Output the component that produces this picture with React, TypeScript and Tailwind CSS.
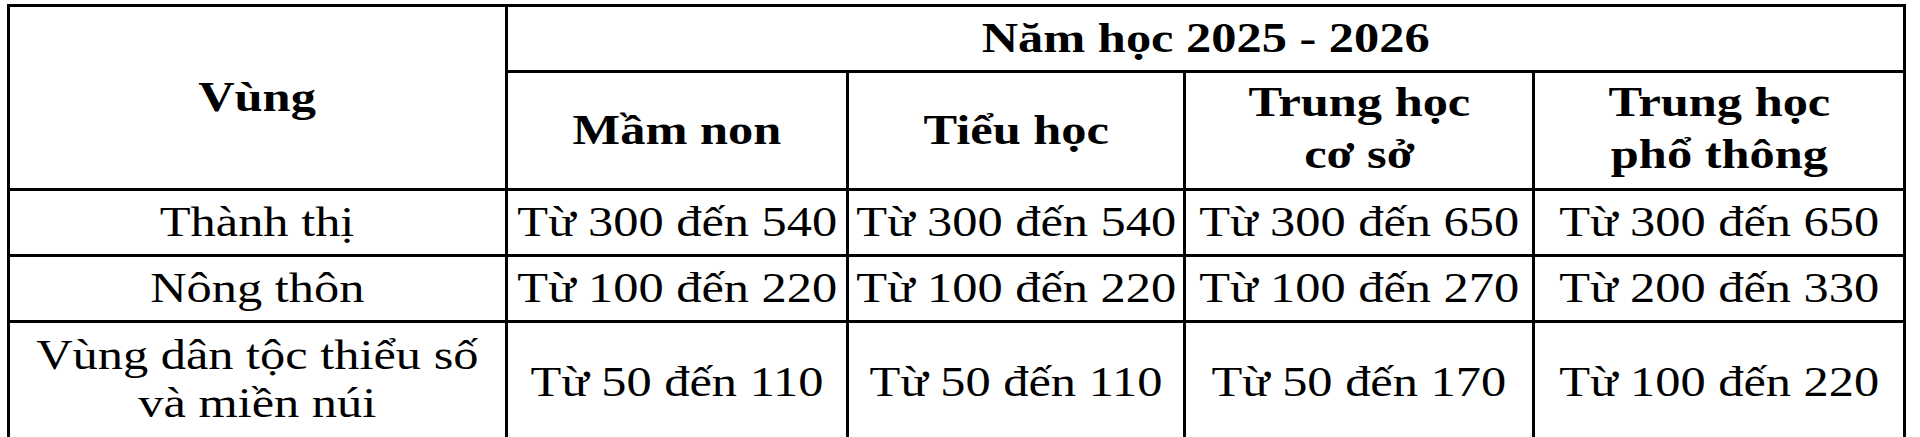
// the source table is stretched sideways, so every label gets a horizontal scale
const boldLabel =
  "inline-block scale-x-120 whitespace-nowrap font-['Liberation_Serif'] font-bold leading-[52px]";
const plainLabel =
  "inline-block scale-x-120 whitespace-nowrap font-['Liberation_Serif'] font-normal leading-[48px]";
const cell =
  "border-[3px] border-black p-0 text-center align-middle font-['Liberation_Serif'] text-[42px] text-black";
const page =
  "h-[437px] w-[1920px] overflow-hidden bg-white pl-[7px] pt-[4px] font-['Liberation_Serif'] text-[42px] text-black";

const Label = ({ lines, bold = false }: { lines: string[]; bold?: boolean }) => (
  <span className={bold ? boldLabel : plainLabel}>
    {lines.map((line, i) => (
      <span key={i}>
        {i > 0 && <br />}
        {line}
      </span>
    ))}
  </span>
);

export default function App() {
  return (
    <div className={page}>
      <table className="w-[1896px] table-fixed border-collapse">
        <colgroup>
          <col className="w-[498px]" />
          <col className="w-[341px]" />
          <col className="w-[337px]" />
          <col className="w-[349px]" />
          <col className="w-[371px]" />
        </colgroup>
        <thead>
          <tr className="h-[62px]">
            <th rowSpan={2} className={cell}>
              <Label lines={[REGION_TITLE]} bold />
            </th>
            <th colSpan={4} className={cell}>
              <Label lines={[YEAR_TITLE]} bold />
            </th>
          </tr>
          <tr className="h-[118px]">
            {levels.map((lines, i) => (
              <th key={i} className={cell}>
                <Label lines={lines} bold />
              </th>
            ))}
          </tr>
        </thead>
        <tbody>
          {rows.map((row, r) => (
            <tr key={r} className={row.height}>
              <td className={cell}>
                <Label lines={row.region} />
              </td>
              {row.values.map((v, i) => (
                <td key={i} className={cell}>
                  <Label lines={[v]} />
                </td>
              ))}
            </tr>
          ))}
        </tbody>
      </table>
    </div>
  );
}

// data kept at the bottom, below all class strings
const REGION_TITLE = "Vùng";
const YEAR_TITLE = "Năm học 2025 - 2026";

const levels = [
  ["Mầm non"],
  ["Tiểu học"],
  ["Trung học", "cơ sở"],
  ["Trung học", "phổ thông"],
];

const rows = [
  {
    region: ["Thành thị"],
    values: ["Từ 300 đến 540", "Từ 300 đến 540", "Từ 300 đến 650", "Từ 300 đến 650"],
    height: "h-[63px]",
  },
  {
    region: ["Nông thôn"],
    values: ["Từ 100 đến 220", "Từ 100 đến 220", "Từ 100 đến 270", "Từ 200 đến 330"],
    height: "h-[61px]",
  },
  {
    region: ["Vùng dân tộc thiểu số", "và miền núi"],
    values: ["Từ 50 đến 110", "Từ 50 đến 110", "Từ 50 đến 170", "Từ 100 đến 220"],
    height: "h-[122px]",
  },
];
